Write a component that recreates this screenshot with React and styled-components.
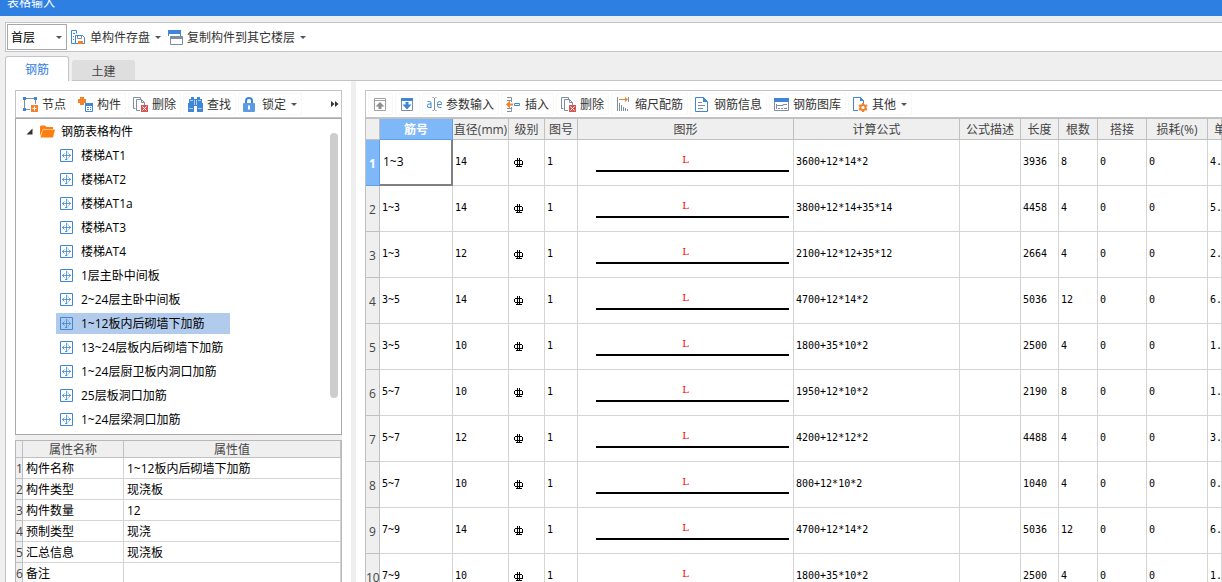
import React, {useState} from 'react';
import styled, {createGlobalStyle} from 'styled-components';

const sans = '"Open Sans", "Noto Sans CJK SC", sans-serif';
const mono = '"DejaVu Sans Mono", "Liberation Mono", monospace';

const blue = '#3f87d6';
const slate = '#7f8fa0';
const orange = '#f5822a';
const red = '#d9534f';

const components = [
  '楼梯AT1',
  '楼梯AT2',
  '楼梯AT1a',
  '楼梯AT3',
  '楼梯AT4',
  '1层主卧中间板',
  '2~24层主卧中间板',
  '1~12板内后砌墙下加筋',
  '13~24层板内后砌墙下加筋',
  '1~24层厨卫板内洞口加筋',
  '25层板洞口加筋',
  '1~24层梁洞口加筋',
];

const properties = [
  {name: '构件名称', value: '1~12板内后砌墙下加筋'},
  {name: '构件类型', value: '现浇板'},
  {name: '构件数量', value: '12'},
  {name: '预制类型', value: '现浇'},
  {name: '汇总信息', value: '现浇板'},
  {name: '备注', value: ''},
];

const columns = [
  {title: '筋号', width: 73},
  {title: '直径(mm)', width: 56},
  {title: '级别', width: 36},
  {title: '图号', width: 33},
  {title: '图形', width: 216},
  {title: '计算公式', width: 166},
  {title: '公式描述', width: 61},
  {title: '长度', width: 38},
  {title: '根数', width: 39},
  {title: '搭接', width: 49},
  {title: '损耗(%)', width: 61},
];

const bars = [
  {no: '1~3', diameter: 14, formula: '3600+12*14*2', length: 3936, count: 8, weight: '4.'},
  {no: '1~3', diameter: 14, formula: '3800+12*14+35*14', length: 4458, count: 4, weight: '5.'},
  {no: '1~3', diameter: 12, formula: '2100+12*12+35*12', length: 2664, count: 4, weight: '2.'},
  {no: '3~5', diameter: 14, formula: '4700+12*14*2', length: 5036, count: 12, weight: '6.'},
  {no: '3~5', diameter: 10, formula: '1800+35*10*2', length: 2500, count: 4, weight: '1.'},
  {no: '5~7', diameter: 10, formula: '1950+12*10*2', length: 2190, count: 8, weight: '1.'},
  {no: '5~7', diameter: 12, formula: '4200+12*12*2', length: 4488, count: 4, weight: '3.'},
  {no: '5~7', diameter: 10, formula: '800+12*10*2', length: 1040, count: 4, weight: '0.'},
  {no: '7~9', diameter: 14, formula: '4700+12*14*2', length: 5036, count: 12, weight: '6.'},
  {no: '7~9', diameter: 10, formula: '1800+35*10*2', length: 2500, count: 4, weight: '1.'},
];

const GlobalStyle = createGlobalStyle`
  * { box-sizing: border-box; }
  body {
    margin: 0;
    overflow: hidden;
    background: #efefef;
    color: #000;
    font-family: ${sans};
    font-size: 12px;
  }
  button, select { font: inherit; color: inherit; }
`;

const Window = styled.div`
  display: flex;
  flex-direction: column;
  height: 100vh;
  overflow: hidden;
`;

const TitleBar = styled.header`
  flex: none;
  height: 16px;
  padding-left: 7px;
  background: #2d80e2;
  color: #fff;
  line-height: 6px;
  overflow: hidden;
`;

const MainToolbar = styled.div`
  display: flex;
  flex: none;
  align-items: center;
  gap: 1px;
  height: 30px;
  margin: 6px 0 4px 5px;
  padding-left: 1px;
  background: #fff;
  border: 1px solid #c3c3c8;
  border-right: none;
`;

const FloorBox = styled.label`
  position: relative;
  display: block;
  width: 60px;
  height: 26px;

  svg {
    position: absolute;
    right: 5px;
    top: 12px;
    pointer-events: none;
  }
`;

const FloorSelect = styled.select`
  appearance: none;
  width: 100%;
  height: 100%;
  padding: 0 0 0 3px;
  border: 1px solid #a8a8a8;
  border-radius: 0;
  background: #fff;
`;

const MenuButton = styled.button`
  display: flex;
  align-items: center;
  gap: 4px;
  height: 24px;
  padding: 0 3px;
  border: none;
  background: none;
  color: #333;
  white-space: nowrap;
`;

const Tabs = styled.div`
  display: flex;
  flex: none;
  align-items: flex-end;
  gap: 3px;
  height: 25px;
  padding-left: 5px;
`;

const Tab = styled.button`
  width: ${p => (p.$active ? 64 : 63)}px;
  height: ${p => (p.$active ? 25 : 21)}px;
  padding: 0;
  border: ${p => (p.$active ? '1px solid #c3c3c8' : 'none')};
  border-bottom: none;
  border-radius: 3px 3px 0 0;
  background: ${p => (p.$active ? '#fff' : '#dedede')};
  color: ${p => (p.$active ? '#2d80e2' : '#444')};
`;

const TabLine = styled.div`
  flex: 1;
  height: 1px;
  margin-left: -66px;
  background: #c3c3c8;
`;

const Page = styled.main`
  display: flex;
  flex: 1;
  min-height: 0;
  margin-left: 5px;
  border-left: 1px solid #c3c3c8;
  background: #fff;
`;

const LeftPane = styled.section`
  display: flex;
  flex: none;
  flex-direction: column;
  width: 345px;
  padding: 9px 9px 0;
  overflow: hidden;
`;

const Splitter = styled.div`
  flex: none;
  width: 5px;
  background: #efefef;
`;

const RightPane = styled.section`
  flex: 1;
  min-width: 0;
  padding: 9px 0 0 9px;
  overflow: hidden;
`;

const Toolbar = styled.div`
  display: flex;
  flex: none;
  align-items: center;
  gap: 2px;
  height: 28px;
  padding-left: 2px;
  border: 1px solid #c3c3c8;
  border-right-width: ${p => (p.$open ? 0 : 1)}px;
`;

const ToolButton = styled.button`
  display: flex;
  flex: none;
  align-items: center;
  gap: 4px;
  height: 22px;
  padding: 0 4px;
  border: 1px solid #f8f8f8;
  border-radius: 2px;
  background: #fff;
  color: #333;
  white-space: nowrap;
`;

const MoreButton = styled(ToolButton)`
  margin-left: auto;
  padding: 0 2px;
  border: none;
`;

const Tree = styled.div`
  display: flex;
  flex: 0 0 317px;
  justify-content: space-between;
  border: 1px solid #a9a9a9;
`;

const TreeBody = styled.div`
  padding-left: 10px;
`;

const FolderRow = styled.button`
  display: flex;
  align-items: center;
  height: 24px;
  padding: 0;
  border: none;
  background: none;

  svg + svg { margin: 0 6px 0 7px; }
`;

const TreeList = styled.ul`
  display: inline-grid;
  grid-auto-rows: 24px;
  align-items: center;
  margin: 0;
  padding: 0 0 0 30px;
  list-style: none;
`;

const TreeItem = styled.button`
  display: flex;
  align-items: center;
  gap: 8px;
  width: 100%;
  height: 21px;
  padding: 0 7px 0 4px;
  border: none;
  background: ${p => (p.$selected ? '#b1cbed' : 'none')};
  white-space: nowrap;
`;

const Scroll = styled.div`
  display: flex;
  width: 8px;
  margin: 14px 3px 0 0;
`;

const Thumb = styled.div`
  width: 8px;
  height: 88%;
  border-radius: 4px;
  background: #cdcdcd;
`;

const Gap = styled.div`
  flex: none;
  height: 5px;
  background: #efefef;
`;

const Grid = styled.table`
  table-layout: fixed;
  width: 100%;
  border-collapse: separate;
  border-spacing: 0;
`;

const HeadCell = styled.th`
  height: ${p => p.$height}px;
  padding: 2px 0 0;
  border-right: 1px solid ${p => (p.$active ? '#5f9fe8' : '#c0c0c0')};
  border-bottom: 1px solid ${p => (p.$active ? '#5f9fe8' : '#c0c0c0')};
  background: ${p => (p.$active ? '#7eb8f8' : '#efefef')};
  color: ${p => (p.$active ? '#fff' : '#444')};
  font-weight: ${p => (p.$active ? 'bold' : 'normal')};
  line-height: 14px;
  text-align: ${p => (p.$left ? 'left' : 'center')};
  white-space: nowrap;
`;

const PropertyGrid = styled(Grid)`
  border: 1px solid #b8b8b8;
  border-bottom: none;
`;

const PropertyCell = styled.td`
  height: 21px;
  padding: 2px 3px 0;
  border-right: 1px solid #d4d4d4;
  border-bottom: 1px solid #d4d4d4;
  line-height: 16px;
  white-space: nowrap;
`;

const BarGrid = styled(Grid)`
  border-top: 1px solid #c0c0c0;
  border-left: 1px solid #c0c0c0;
`;

const WeightHead = styled(HeadCell)`
  padding-left: 6px;
`;

const BarCell = styled.td`
  height: 46px;
  padding: 0 0 2px 2px;
  border-right: 1px solid #d4d4d4;
  border-bottom: 1px solid #d4d4d4;
  font-family: ${mono};
  font-size: 10px;
  line-height: 16px;
  white-space: nowrap;
`;

const CurrentCell = styled(BarCell)`
  padding: 0 0 0 3px;
  border-right: 2px solid #808080;
  border-bottom: 2px solid #808080;
  font-family: ${sans};
  font-size: 12px;
`;

const LevelCell = styled(BarCell)`
  padding: 0 0 0 5px;

  svg { display: block; }
`;

const ShapeCell = styled(BarCell)`
  padding: 12px 4px 0 18px;
  vertical-align: top;
`;

const ShapeLabel = styled.div`
  height: 18px;
  padding-right: 14px;
  color: #f00;
  font-family: "DejaVu Serif", serif;
  font-size: 10px;
  line-height: 16px;
  text-align: center;
`;

const ShapeLine = styled.div`
  height: 2px;
  background: #000;
`;

const CaretIcon = styled.svg`
  flex: none;
  margin-left: 1px;
`;

function Caret() {
  return (
    <CaretIcon width="6" height="3" viewBox="0 0 6 3">
      <path d="M0 0h6L3 3z" fill="#555" />
    </CaretIcon>
  );
}

function Icon({children}) {
  return (
    <svg width="15" height="15" viewBox="0 0 15 15" fill="none" stroke={blue}>
      {children}
    </svg>
  );
}

const icons = {
  save: (
    <Icon>
      <path d="M4.5 13.5h-4v-13h5v3M2 3.5h2M2 6.5h1M2 9.5h1" />
      <path d="M4.5 5.5h7l2 2v6h-9z" />
      <path d="M6.5 6v2.5h4V6" stroke={slate} />
      <path d="M7 11h5v3H7z" fill={orange} stroke="none" />
    </Icon>
  ),
  copy: (
    <Icon>
      <path d="M0.5 6V0.5h12v8" />
      <path d="M0 0h13v4H0z" fill={blue} stroke="none" />
      <path d="M2.5 6.500h12v8h-12z" stroke={slate} fill="#fff" />
      <path d="M2 6h13v3H2z" fill={slate} stroke="none" />
    </Icon>
  ),
  node: (
    <Icon>
      <path d="M3 1.5h8M1.5 3v8M3 12.5h4M12.5 3v4" stroke={slate} />
      <path d="M0 0h3v3H0zM11 0h3v3h-3zM0 11h3v3H0z" fill={blue} stroke="none" />
      <path d="M8 8h7v7H8z" fill={orange} stroke="none" />
      <path d="M11.5 9.5v4M9.5 11.5h4" stroke="#fff" />
    </Icon>
  ),
  component: (
    <Icon>
      <path d="M2 0h4v2h2v4H6v2H2V6H0V2h2z" fill={orange} stroke="none" />
      <path d="M7.5 7.500h7v7h-7z" fill="#fff" />
      <path d="M7 6h8v3H7z" fill={blue} stroke="none" />
      <path d="M9 10.5h2M12 10.5h1M9 12.5h2M12 12.5h1" />
    </Icon>
  ),
  remove: (
    <Icon>
      <path d="M2.5 11.5h-2v-11h7v2" stroke={slate} />
      <path d="M7 13.5H3.5v-11h5l3 3V8M8.5 2.5v3h3" stroke={slate} />
      <path d="M8 8h7v7H8z" fill={red} stroke="none" />
      <path d="M9.5 9.5l4 4M13.5 9.5l-4 4" stroke="#fff" />
    </Icon>
  ),
  find: (
    <Icon>
      <path d="M3 0h3v2h3V0h3v2h2v4h1v9H9V9H6v6H0V6h1V2h2z" fill={blue} stroke="none" />
      <path d="M6.5 3v5M8.5 3v5M1 11.5h4M10 11.5h4M2 3.5h3M10 3.5h3" stroke="#a9cbf0" />
    </Icon>
  ),
  lock: (
    <Icon>
      <path d="M3 7V4a3 3 0 0 1 6 0v3" strokeWidth="2" />
      <rect x="0" y="6" width="12" height="9" rx="1" fill="#5b9be3" stroke="none" />
      <path d="M6 8.5v4" stroke="#fff" strokeWidth="2" />
    </Icon>
  ),
  up: (
    <Icon>
      <path d="M1.5 1.5h11v12h-11z" stroke="#a0a0a0" />
      <path d="M1 3.5h12" stroke="#a0a0a0" />
      <path d="M2.500 9.500L7 5l4.500 4.500H8.500V12h-3V9.500z" fill="#8c8c8c" stroke="none" />
    </Icon>
  ),
  down: (
    <Icon>
      <path d="M1.5 1.5h11v12h-11z" stroke={slate} />
      <path d="M1 1h12v3H1z" fill={blue} stroke="none" />
      <path d="M5.500 5h3v2.500h3L7 12.500 2.500 7.500h3z" fill={blue} stroke="none" />
    </Icon>
  ),
  param: (
    <Icon>
      <path d="M0.500 4.500h2a1.500 1.500 0 0 1 1.500 1.500v5M4 7H2a1.700 1.700 0 1 0 0 3.500h2" />
      <path d="M5.5 0.5h1l1 1 1-1h1M7.5 1v12M5.5 13.5h1l1-1 1 1h1" stroke={slate} />
      <path d="M10.500 7.500h4V6.500a2 2 0 0 0-4 0v2a2 2 0 0 0 2 2h2" />
    </Icon>
  ),
  insert: (
    <Icon>
      <path d="M1 0.5h4.500v3H1M1 14.5h4.500v-3H1M5.500 3v2M5.500 10v2" stroke={slate} />
      <path d="M0 7.5L4 3.500v3h3v2H4v3z" fill={orange} stroke="none" />
      <path d="M8.5 6.5h5v2h-5z" />
    </Icon>
  ),
  scale: (
    <Icon>
      <path d="M1.5 0v5M12.5 0v5" stroke={slate} />
      <path d="M3 2.5h7" stroke={orange} />
      <path d="M9 0l3 2.5L9 5z" fill={orange} stroke="none" />
      <path d="M1.5 5v9M3.5 6v8M5.5 8v6M7.5 10v4M9.5 11v3M11.5 12v2" stroke={slate} />
    </Icon>
  ),
  info: (
    <Icon>
      <path d="M0.5 0.5h8l4 4v10h-12z" />
      <path d="M8 0l5 5H8z" fill={blue} stroke="none" />
      <path d="M3 5.5h4M3 8.5h7M3 11.5h5" stroke={slate} />
    </Icon>
  ),
  library: (
    <Icon>
      <path d="M0.5 1.5h14v12h-14z" stroke={slate} />
      <path d="M0 1h15v4H0z" fill={blue} stroke="none" />
      <path d="M2.5 7v5M2 8.5h7v-1h4M4 11.5h2M7 11.5h2M10 11.5h3" stroke={slate} />
    </Icon>
  ),
  other: (
    <Icon>
      <path d="M5 13.5H0.5v-13h7l3 3V6" />
      <path d="M7 0l4 4H7z" fill={blue} stroke="none" />
      <circle cx="10" cy="10.5" r="2.600" stroke={orange} strokeWidth="2" />
      <path
        d="M10 6v2M10 13v2M6 8.200l1.600 1M12.400 11.800l1.600 1M14 8.200l-1.600 1M7.600 11.800l-1.600 1"
        stroke={orange}
        strokeWidth="2"
      />
    </Icon>
  ),
};

function ItemIcon() {
  return (
    <svg width="13" height="13" viewBox="0 0 13 13" fill="none" stroke={blue}>
      <path d="M0.5 0.5h12v12h-12z" />
      <path
        d="M6.5 2v9M2 6.500h9M2.500 6.500l2-2M2.500 6.500l2 2M10.500 6.500l-2-2M10.500 6.500l-2 2M5 10.500h2l1-1M7 2.500l1 1"
        strokeWidth="0.8"
      />
    </svg>
  );
}

// 三级钢符号
function LevelIcon() {
  return (
    <svg width="10" height="10" viewBox="0 0 10 10" fill="none" stroke="#000">
      <path d="M1 2.5h7M1 6.5h8M0.5 3v3M8.5 3v3M3.500 0v9M5.500 0v9M2 8.500h6" />
    </svg>
  );
}

function Tool({icon, label, text, menu}) {
  return (
    <ToolButton type="button" aria-label={label}>
      {icons[icon]}
      {text}
      {menu && <Caret />}
    </ToolButton>
  );
}

export default function App() {
  const [tab, setTab] = useState(0);
  const [selected, setSelected] = useState(7);

  return (
    <>
      <GlobalStyle />
      <Window>
        <TitleBar>表格输入</TitleBar>

        <MainToolbar>
          <FloorBox>
            <FloorSelect aria-label="楼层">
              <option>首层</option>
            </FloorSelect>
            <Caret />
          </FloorBox>
          <MenuButton type="button">{icons.save}单构件存盘 <Caret /></MenuButton>
          <MenuButton type="button">{icons.copy}复制构件到其它楼层 <Caret /></MenuButton>
        </MainToolbar>

        <Tabs>
          <Tab type="button" $active={tab === 0} onClick={() => setTab(0)}>钢筋</Tab>
          <Tab type="button" $active={tab === 1} onClick={() => setTab(1)}>土建</Tab>
          <TabLine />
        </Tabs>

        <Page>
          <LeftPane>
            <Toolbar>
              <Tool icon="node" text="节点" />
              <Tool icon="component" text="构件" />
              <Tool icon="remove" text="删除" />
              <Tool icon="find" text="查找" />
              <Tool icon="lock" text="锁定" menu />
              <MoreButton type="button" aria-label="更多">
                <svg width="8" height="6" viewBox="0 0 8 6" fill="#333">
                  <path d="M0 0l3.5 3L0 6zM4 0l3.5 3L4 6z" />
                </svg>
              </MoreButton>
            </Toolbar>

            <Tree>
              <TreeBody>
                <FolderRow type="button">
                  <svg width="7" height="7" viewBox="0 0 7 7">
                    <path d="M6.5 0.5v6h-6z" fill="#333" />
                  </svg>
                  <svg width="15" height="13" viewBox="0 0 15 13" fill="#ff7f0e">
                    <path d="M0 11V1.5L1 0.5h4l1.5 1.5H13v2H3z" />
                    <path d="M3 4.500H15l-2 8H0.500z" />
                  </svg>
                  钢筋表格构件
                </FolderRow>
                <TreeList>
                  {components.map((name, i) => (
                    <li key={name}>
                      <TreeItem type="button" $selected={selected === i} onClick={() => setSelected(i)}>
                        <ItemIcon />
                        {name}
                      </TreeItem>
                    </li>
                  ))}
                </TreeList>
              </TreeBody>
              <Scroll>
                <Thumb />
              </Scroll>
            </Tree>
            <Gap />

            <PropertyGrid>
              <colgroup>
                <col width="7" />
                <col width="101" />
                <col />
              </colgroup>
              <thead>
                <tr>
                  <HeadCell $height={17} />
                  <HeadCell $height={17}>属性名称</HeadCell>
                  <HeadCell $height={17}>属性值</HeadCell>
                </tr>
              </thead>
              <tbody>
                {properties.map((p, i) => (
                  <tr key={p.name}>
                    <HeadCell $height={21}>{i + 1}</HeadCell>
                    <PropertyCell>{p.name}</PropertyCell>
                    <PropertyCell>{p.value}</PropertyCell>
                  </tr>
                ))}
              </tbody>
            </PropertyGrid>
          </LeftPane>

          <Splitter />

          <RightPane>
            <Toolbar $open>
              <Tool icon="up" label="上移" />
              <Tool icon="down" label="下移" />
              <Tool icon="param" text="参数输入" />
              <Tool icon="insert" text="插入" />
              <Tool icon="remove" text="删除" />
              <Tool icon="scale" text="缩尺配筋" />
              <Tool icon="info" text="钢筋信息" />
              <Tool icon="library" text="钢筋图库" />
              <Tool icon="other" text="其他" menu />
            </Toolbar>

            <BarGrid>
              <colgroup>
                <col width="14" />
                {columns.map(c => <col key={c.title} width={c.width} />)}
                <col />
              </colgroup>
              <thead>
                <tr>
                  <HeadCell $height={21} />
                  {columns.map((c, i) => (
                    <HeadCell key={c.title} $height={21} $active={i === 0}>{c.title}</HeadCell>
                  ))}
                  <WeightHead $height={21} $left>单</WeightHead>
                </tr>
              </thead>
              <tbody>
                {bars.map((bar, i) => {
                  const NumberCell = i === 0 ? CurrentCell : BarCell;
                  return (
                    <tr key={i}>
                      <HeadCell $height={46} $active={i === 0}>{i + 1}</HeadCell>
                      <NumberCell>{bar.no}</NumberCell>
                      <BarCell>{bar.diameter}</BarCell>
                      <LevelCell><LevelIcon /></LevelCell>
                      <BarCell>1</BarCell>
                      <ShapeCell>
                        <ShapeLabel>L</ShapeLabel>
                        <ShapeLine />
                      </ShapeCell>
                      <BarCell>{bar.formula}</BarCell>
                      <BarCell />
                      <BarCell>{bar.length}</BarCell>
                      <BarCell>{bar.count}</BarCell>
                      <BarCell>0</BarCell>
                      <BarCell>0</BarCell>
                      <BarCell>{bar.weight}</BarCell>
                    </tr>
                  );
                })}
              </tbody>
            </BarGrid>
          </RightPane>
        </Page>
      </Window>
    </>
  );
}
